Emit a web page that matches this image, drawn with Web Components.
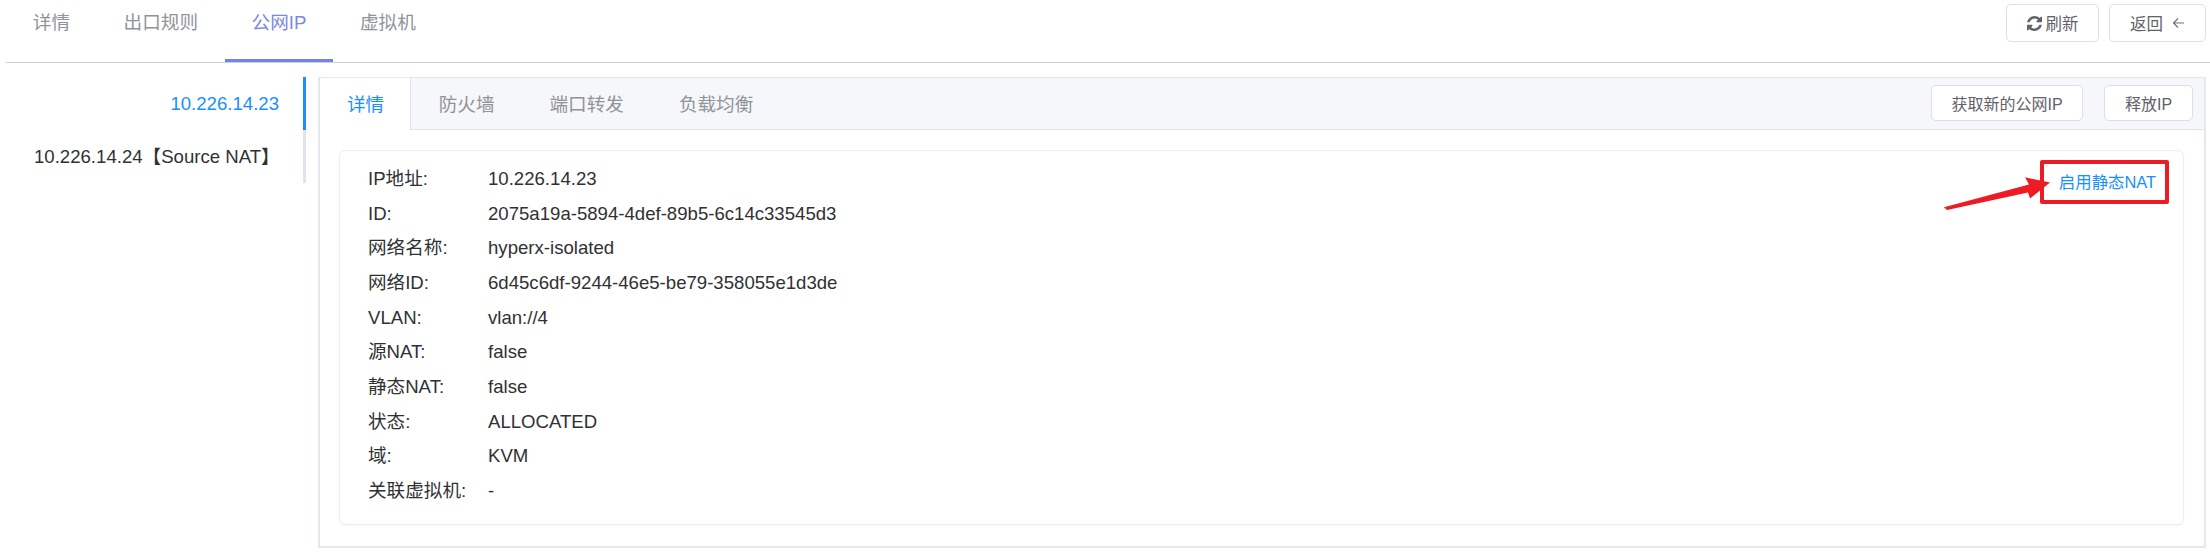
<!DOCTYPE html>
<html lang="zh"><head><meta charset="utf-8"><title>公网IP</title>
<style>
html,body{margin:0;padding:0;background:#fff}
body{font-family:"Liberation Sans","Noto Sans CJK SC",sans-serif;color:#303133;width:2210px;height:557px;overflow:hidden}
</style></head><body>
<ip-page>
  <main-tabs slot="tabs">
    <tab-item>详情</tab-item><tab-item>出口规则</tab-item><tab-item active>公网IP</tab-item><tab-item>虚拟机</tab-item>
    <span slot="actions" style="display:flex;gap:10px">
      <ui-btn w="93" h="38" fs="16.5" icon="refresh">刷新</ui-btn>
      <ui-btn w="97" h="38" fs="16.5" icon="back">返回</ui-btn>
    </span>
  </main-tabs>
  <ip-list slot="side">
    <ip-item active>10.226.14.23</ip-item>
    <ip-item>10.226.14.24【Source NAT】</ip-item>
  </ip-list>
  <detail-panel slot="panel">
    <sub-tab active>详情</sub-tab><sub-tab>防火墙</sub-tab><sub-tab>端口转发</sub-tab><sub-tab>负载均衡</sub-tab>
    <span slot="actions" style="display:flex;gap:21px">
      <ui-btn w="152" h="36">获取新的公网IP</ui-btn>
      <ui-btn w="89" h="36">释放IP</ui-btn>
    </span>
    <info-card slot="body">
      <info-row label="IP地址:">10.226.14.23</info-row>
      <info-row label="ID:">2075a19a-5894-4def-89b5-6c14c33545d3</info-row>
      <info-row label="网络名称:">hyperx-isolated</info-row>
      <info-row label="网络ID:">6d45c6df-9244-46e5-be79-358055e1d3de</info-row>
      <info-row label="VLAN:">vlan://4</info-row>
      <info-row label="源NAT:">false</info-row>
      <info-row label="静态NAT:">false</info-row>
      <info-row label="状态:">ALLOCATED</info-row>
      <info-row label="域:">KVM</info-row>
      <info-row label="关联虚拟机:">-</info-row>
      <nat-callout slot="callout">启用静态NAT</nat-callout>
    </info-card>
  </detail-panel>
</ip-page>
<script>
const def=(name,css,html)=>{customElements.define(name,class extends HTMLElement{
  constructor(){super();const r=this.attachShadow({mode:'open'});
    r.innerHTML=`<style>${css}</style>${typeof html==='function'?html(this):html}`;}
})};
def('ip-page',`:host{display:block;width:2210px}
 .row{display:flex;margin-top:14px;padding-left:6px;align-items:flex-start}`,
 `<slot name="tabs"></slot><div class="row"><slot name="side"></slot><slot name="panel"></slot></div>`);
def('main-tabs',`:host{display:flex;justify-content:space-between;height:62px;margin-left:6px;border-bottom:1px solid #d0d0d2}
 .l{display:flex}.r{padding:4px 4px 0 0}`,
 `<div class="l"><slot></slot></div><div class="r"><slot name="actions"></slot></div>`);
def('tab-item',`:host{display:block;padding:0 26.8px;height:62px;line-height:46px;font-size:18.6px;color:#909399;box-sizing:border-box}
 :host([active]){color:#7a86e8;border-bottom:3px solid #7284e8}`,`<slot></slot>`);
def('ui-btn',`:host{display:inline-flex;align-items:center;justify-content:center;box-sizing:border-box;background:#fff;border:1px solid #dcdfe6;border-radius:5px;font-size:16px;color:#606266;gap:4px}
 svg{display:block}`,
 el=>{const i=el.getAttribute('icon');el.style.width=el.getAttribute('w')+'px';el.style.height=el.getAttribute('h')+'px';
  if(el.getAttribute('fs'))el.style.fontSize=el.getAttribute('fs')+'px';
  const refresh=`<svg width="15" height="15" viewBox="0 0 1536 1536"><path fill="#606266" d="M1511 928q0 5-1 7-64 268-268 434.500T764 1536q-146 0-282.500-55T238 1324l-129 129q-19 19-45 19t-45-19-19-45V960q0-26 19-45t45-19h448q26 0 45 19t19 45-19 45l-137 137q71 66 161 102t187 36q134 0 250-65t186-179q11-17 53-117 8-23 30-23h192q13 0 22.500 9.500t9.500 22.500zm25-800v448q0 26-19 45t-45 19h-448q-26 0-45-19t-19-45 19-45l138-138Q969 256 768 256q-134 0-250 65T332 500q-11 17-53 117-8 23-30 23H50q-13 0-22.500-9.500T18 608v-7q65-268 270-434.500T768 0q146 0 284 55.500T1297 212l130-129q19-19 45-19t45 19 19 45z"/></svg>`;
  const back=`<svg width="13" height="14" viewBox="0 0 13 14" fill="none" stroke="#72757c" stroke-width="1.2" style="margin-left:5px"><path d="M12 7H1.500M6 2.500 1.500 7 6 11.500"/></svg>`;
  return (i==='refresh'?refresh:'')+`<slot></slot>`+(i==='back'?back:'');});
def('ip-list',`:host{display:block;width:300px;flex:none;border-right:3px solid #e0e3ec;box-sizing:border-box;margin-right:12px}`,`<slot></slot>`);
def('ip-item',`:host{display:block;height:53px;line-height:53px;padding:0 24px 0 0;margin-right:-3px;text-align:right;font-size:18.6px;color:#303133;white-space:nowrap;box-sizing:border-box}
 :host([active]){color:#1890ff;border-right:3px solid #1890ff}
 :host(:not([active])){text-align:left;padding-left:28px}`,`<slot></slot>`);
def('detail-panel',`:host{display:block;width:1888px;height:471px;box-sizing:border-box;border:solid #e4e7ed;border-width:1px 2px 2px 2px;background:#fff}
 .head{display:flex;justify-content:space-between;height:51px;background:#f5f7fa;border-bottom:1px solid #e0e3ec}
 .tabs{display:flex}.act{padding:7px 11px 0 0}
 .body{padding:20px 20px 0 19px}`,
 `<div class="head"><div class="tabs"><slot></slot></div><div class="act"><slot name="actions"></slot></div></div><div class="body"><slot name="body"></slot></div>`);
def('sub-tab',`:host{display:block;padding:0 27.5px;height:51px;line-height:53px;font-size:18.6px;color:#909399;box-sizing:border-box}
 :host([active]){background:#fff;color:#1890ff;height:52px;border-right:1px solid #e0e3ec;padding:0 26px 0 27px}`,`<slot></slot>`);
def('info-card',`:host{display:block;position:relative;height:375px;box-sizing:border-box;border:1px solid #ebeef5;border-radius:6px;padding:11px 0 0 28px;background:#fff;box-shadow:0 1px 2px rgba(0,0,0,.04)}`,
 `<slot></slot><slot name="callout"></slot>`);
def('info-row',`:host{display:flex;height:34.67px;line-height:34.67px;font-size:18.6px;color:#303133}
 .k{width:120px;flex:none}`,
 el=>`<span class="k">${el.getAttribute('label')}</span><span><slot></slot></span>`);
def('nat-callout',`:host{position:absolute;right:14px;top:9px;box-sizing:border-box;width:129px;height:44px;border:4px solid #ed1c24;border-radius:2px;font-size:16.4px;color:#1890ff;line-height:36px;text-align:right;padding-right:9px;white-space:nowrap}
 svg{position:absolute;left:-100px;top:13px;overflow:visible}`,
 `<svg width="110" height="36" viewBox="0 0 110 36"><path fill="#ed1c24" d="M0 30.300 L85 7.500 L81 .3 L106 5.500 L86 21.500 L84 15.500 L3 33Z"/></svg><slot></slot>`);
</script>
</body></html>
